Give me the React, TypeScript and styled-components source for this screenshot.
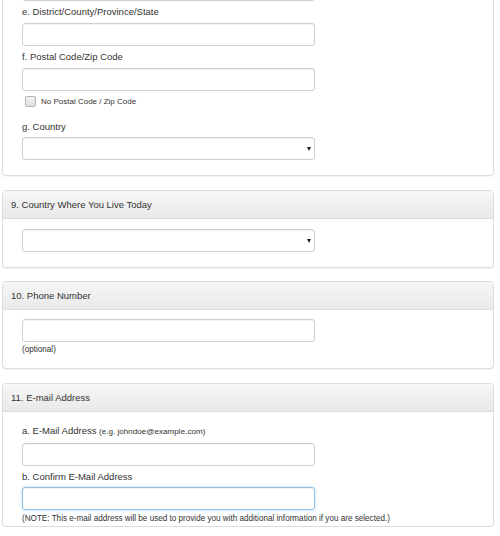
import React from "react";
import styled, { createGlobalStyle, css } from "styled-components";

const Global = createGlobalStyle`
  html, body { margin: 0; padding: 0; background: #fff; }
  body { font-family: "Liberation Sans", Arial, sans-serif; color: #333; overflow: hidden; }
  * { box-sizing: border-box; }
`;

const Page = styled.div`
  margin-top: -23px;
  padding: 0 6px 0 2px;
  display: flex;
  flex-direction: column;
`;

const Panel = styled.section<{ $gap?: number }>`
  margin-top: ${(p) => p.$gap ?? 0}px;
  border: 1px solid #dcdcdc;
  border-radius: 4px;
  background: #fff;
  box-shadow: 0 1px 1px rgba(0, 0, 0, 0.05);
`;

const Header = styled.div`
  height: 28px;
  line-height: 27px;
  padding: 0 8px;
  font-size: 9.5px;
  color: #333;
  border-bottom: 1px solid #dcdcdc;
  border-radius: 3px 3px 0 0;
  background: linear-gradient(to bottom, #f6f6f6 0%, #e9e9e9 100%);
`;

const Body = styled.div<{ $top: number; $bottom: number }>`
  padding: ${(p) => p.$top}px 19px ${(p) => p.$bottom}px 19px;
  display: flex;
  flex-direction: column;
  align-items: flex-start;
`;

const Label = styled.label<{ $top?: number; $bottom?: number }>`
  display: block;
  font-size: 9.5px;
  line-height: 14px;
  color: #333;
  margin-top: ${(p) => p.$top ?? 4}px;
  margin-bottom: ${(p) => p.$bottom ?? 4}px;
`;

const Hint = styled.span`
  font-size: 8.1px;
`;

const fieldBase = css`
  display: block;
  width: 293px;
  height: 23px;
  border: 1px solid #cfcfcf;
  border-radius: 3px;
  background: #fff;
  box-shadow: inset 0 1px 1px rgba(0, 0, 0, 0.06);
  font-family: "Liberation Sans", Arial, sans-serif;
  font-size: 9.5px;
  padding: 0 8px;
  outline: none;
`;

const Input = styled.input<{ $focused?: boolean }>`
  ${fieldBase}
  ${(p) =>
    p.$focused &&
    css`
      border-color: #8fc1e6;
      box-shadow: inset 0 1px 1px rgba(0, 0, 0, 0.05), 0 0 3px rgba(102, 175, 233, 0.45);
    `}
`;

const SelectWrap = styled.div`
  position: relative;
  width: 293px;
`;

const Select = styled.select`
  ${fieldBase}
  appearance: none;
  -webkit-appearance: none;
`;

const Arrow = styled.span`
  position: absolute;
  right: 4px;
  top: 10px;
  width: 0;
  height: 0;
  border-left: 2.5px solid transparent;
  border-right: 2.5px solid transparent;
  border-top: 4px solid #222;
  pointer-events: none;
`;

const CheckRow = styled.label`
  display: flex;
  align-items: center;
  gap: 5px;
  height: 14px;
  margin: 3px 0 8px 3px;
  font-size: 8px;
  color: #333;
`;

const Check = styled.input.attrs({ type: "checkbox" })`
  appearance: none;
  -webkit-appearance: none;
  margin: 0;
  width: 11px;
  height: 11px;
  border: 1px solid #b5b5b5;
  border-radius: 2px;
  background: linear-gradient(to bottom, #f4f4f4, #dedede);
`;

const Small = styled.div<{ $top: number }>`
  font-size: 8.15px;
  line-height: 11px;
  margin-top: ${(p) => p.$top}px;
  color: #333;
`;

function Dropdown() {
  return (
    <SelectWrap>
      <Select defaultValue="">
        <option value=""></option>
      </Select>
      <Arrow />
    </SelectWrap>
  );
}

export default function App() {
  return (
    <>
      <Global />
      <Page>
        <Panel>
          <Body $top={0} $bottom={15}>
            <Input aria-label="d" />
            <Label>e. District/County/Province/State</Label>
            <Input />
            <Label>f. Postal Code/Zip Code</Label>
            <Input />
            <CheckRow>
              <Check />
              No Postal Code / Zip Code
            </CheckRow>
            <Label $top={4} $bottom={3}>g. Country</Label>
            <Dropdown />
          </Body>
        </Panel>

        <Panel $gap={14}>
          <Header>9. Country Where You Live Today</Header>
          <Body $top={10} $bottom={15}>
            <Dropdown />
          </Body>
        </Panel>

        <Panel $gap={13}>
          <Header>10. Phone Number</Header>
          <Body $top={9} $bottom={13}>
            <Input />
            <Small $top={2}>(optional)</Small>
          </Body>
        </Panel>

        <Panel $gap={14}>
          <Header>11. E-mail Address</Header>
          <Body $top={12} $bottom={2}>
            <Label $top={0}>
              a. E-Mail Address <Hint>(e.g. johndoe@example.com)</Hint>
            </Label>
            <Input />
            <Label $top={4} $bottom={3}>b. Confirm E-Mail Address</Label>
            <Input $focused />
            <Small $top={3}>
              (NOTE: This e-mail address will be used to provide you with additional information if you are selected.)
            </Small>
          </Body>
        </Panel>
      </Page>
    </>
  );
}
